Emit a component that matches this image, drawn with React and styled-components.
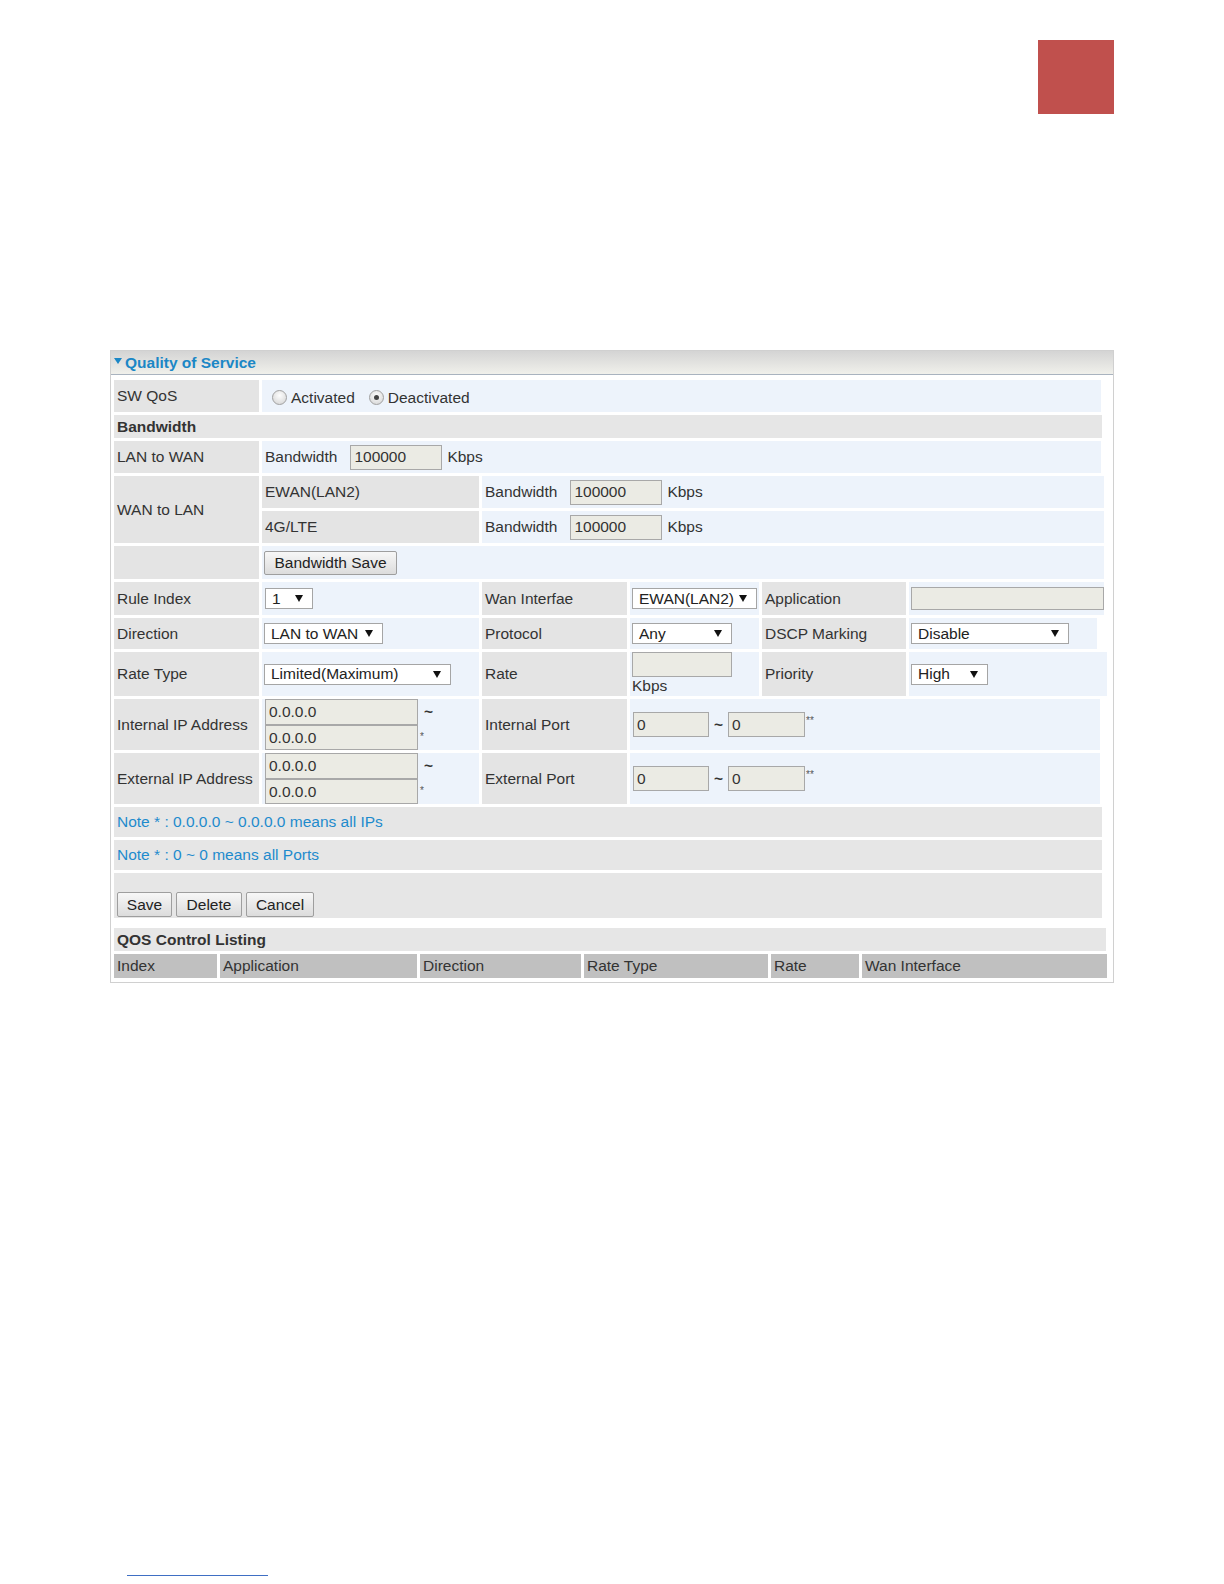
import React from "react";
import styled, { createGlobalStyle } from "styled-components";

const GlobalStyle = createGlobalStyle`
  body {
    margin: 0;
    background: #ffffff;
    font-family: "Liberation Sans", Arial, sans-serif;
  }
`;

const Page = styled.div`
  width: 1224px;
  min-height: 1584px;
  overflow: hidden;
`;

const TopBar = styled.div`
  display: flex;
  justify-content: flex-end;
  padding: 40px 110px 0 0;
`;

const Tab = styled.div`
  width: 76px;
  height: 74px;
  background: #c0504d;
`;

const Panel = styled.div`
  box-sizing: border-box;
  width: 1004px;
  margin: 236px 0 0 110px;
  border: 1px solid #d0d0d0;
  padding-bottom: 4px;
`;

const PanelHead = styled.div`
  height: 23px;
  display: flex;
  align-items: center;
  padding-left: 3px;
  background: linear-gradient(#d4d4d4, #f0f0eb);
  border-bottom: 1px solid #a9b3bf;
  color: #1b87c6;
  font-size: 15.5px;
  font-weight: bold;
`;

const Caret = styled.span`
  width: 0;
  height: 0;
  margin: 0 3px 4px 0;
  border-left: 4px solid transparent;
  border-right: 4px solid transparent;
  border-top: 6px solid #1b87c6;
`;

const PanelBody = styled.div`
  display: flex;
  flex-direction: column;
  gap: 3px;
  padding: 5px 0 0 3px;
`;

const Row = styled.div`
  display: flex;
  gap: 3px;
  width: ${(p) => (p.$w ? `${p.$w}px` : "auto")};
  height: ${(p) => p.$h}px;
  margin-top: ${(p) => p.$mt || 0}px;
`;

const SubRows = styled.div`
  flex: 1;
  display: flex;
  flex-direction: column;
  gap: 3px;
`;

const tones = {
  label: "#e4e4e4",
  value: "#edf3fb",
  head: "#c0c0c0",
  band: "#e6e6e6",
};

const Cell = styled.div`
  box-sizing: border-box;
  display: flex;
  flex-direction: ${(p) => (p.$col ? "column" : "row")};
  align-items: ${(p) => (p.$col ? "flex-start" : p.$align || "center")};
  justify-content: ${(p) => (p.$col ? p.$justify || "center" : "flex-start")};
  width: ${(p) => (p.$w ? `${p.$w}px` : "auto")};
  flex: ${(p) => (p.$w ? "none" : "1")};
  padding-left: ${(p) => (p.$pad !== undefined ? p.$pad : 3)}px;
  background: ${(p) => tones[p.$tone || "value"]};
  color: ${(p) => (p.$note ? "#1e8bcd" : "#333333")};
  font-size: 15.5px;
  font-weight: ${(p) => (p.$bold ? "bold" : "normal")};
  white-space: nowrap;
`;

const FieldText = styled.span`
  margin-right: 13px;
`;

const Unit = styled.span`
  margin-left: 5px;
`;

const Input = styled.input`
  box-sizing: border-box;
  width: ${(p) => p.$w}px;
  height: ${(p) => p.$h || 25}px;
  margin: 0;
  padding: 0 3px;
  border: 1px solid #a8a8a8;
  background: #ebebe4;
  color: #333333;
  font-family: "Liberation Sans", Arial, sans-serif;
  font-size: 15.5px;
  outline: none;
`;

const Select = styled.div`
  box-sizing: border-box;
  display: inline-flex;
  align-items: center;
  justify-content: space-between;
  width: ${(p) => p.$w}px;
  height: 21px;
  padding: 0 9px 0 6px;
  border: 1px solid #a5a5a5;
  background: #ffffff;
  color: #222222;
  font-size: 15.5px;
`;

const Arrow = styled.span`
  width: 0;
  height: 0;
  border-left: 4px solid transparent;
  border-right: 4px solid transparent;
  border-top: 7px solid #111111;
`;

const Button = styled.button`
  box-sizing: border-box;
  height: ${(p) => p.$h || 25}px;
  width: ${(p) => p.$w}px;
  padding: 0;
  border: 1px solid #9e9e9e;
  border-radius: 2px;
  background: linear-gradient(#f7f7f7, #dcdcdc);
  color: #222222;
  font-family: "Liberation Sans", Arial, sans-serif;
  font-size: 15.5px;
`;

const ButtonBar = styled.div`
  display: flex;
  gap: 4px;
  margin-bottom: 1px;
`;

const RadioGroup = styled.div`
  display: flex;
  align-items: center;
  gap: 14px;
  margin-top: 3px;
`;

const RadioLabel = styled.label`
  display: flex;
  align-items: center;
  gap: 4px;
`;

const Radio = styled.span`
  box-sizing: border-box;
  width: 15px;
  height: 15px;
  border-radius: 50%;
  border: 1px solid #a0a0a0;
  background: radial-gradient(circle at 50% 35%, #fdfdfd, #d2d2d2);
  display: flex;
  align-items: center;
  justify-content: center;
  &::after {
    content: "";
    width: 5px;
    height: 5px;
    border-radius: 50%;
    background: ${(p) => (p.$on ? "#444444" : "transparent")};
  }
`;

const Line = styled.div`
  display: flex;
  align-items: center;
`;

const Tilde = styled.span`
  margin: ${(p) => p.$m || "0 0 0 6px"};
  font-weight: bold;
  color: #333333;
`;

const Mark = styled.span`
  align-self: flex-start;
  margin: ${(p) => p.$m || "7px 0 0 2px"};
  font-size: 10px;
  line-height: 10px;
  color: #555555;
`;

const FootLine = styled.div`
  width: 141px;
  height: 1px;
  margin: 592px 0 0 127px;
  background: #3f6fc4;
`;

const Drop = ({ w, children }) => (
  <Select $w={w}>
    <span>{children}</span>
    <Arrow />
  </Select>
);

const BandwidthField = ({ w }) => (
  <>
    <FieldText>Bandwidth</FieldText>
    <Input $w={w} defaultValue="100000" readOnly />
    <Unit>Kbps</Unit>
  </>
);

const IpPair = () => (
  <Cell $w={217} $col>
    <Line>
      <Input $w={153} $h={26} defaultValue="0.0.0.0" readOnly />
      <Tilde>~</Tilde>
    </Line>
    <Line>
      <Input $w={153} $h={25} defaultValue="0.0.0.0" readOnly />
      <Mark>*</Mark>
    </Line>
  </Cell>
);

const PortPair = () => (
  <Cell>
    <Line>
      <Input $w={76} defaultValue="0" readOnly />
      <Tilde $m="0 5px">~</Tilde>
      <Input $w={77} defaultValue="0" readOnly />
      <Mark $m="4px 0 0 1px">**</Mark>
    </Line>
  </Cell>
);

const listing = [
  ["Index", 103],
  ["Application", 197],
  ["Direction", 161],
  ["Rate Type", 184],
  ["Rate", 88],
  ["Wan Interface", 0],
];

export default function App() {
  return (
    <>
      <GlobalStyle />
      <Page>
        <TopBar>
          <Tab />
        </TopBar>

        <Panel>
          <PanelHead>
            <Caret />
            Quality of Service
          </PanelHead>

          <PanelBody>
            <Row $w={987} $h={32}>
              <Cell $tone="label" $w={145}>SW QoS</Cell>
              <Cell $pad={10}>
                <RadioGroup>
                  <RadioLabel>
                    <Radio />
                    Activated
                  </RadioLabel>
                  <RadioLabel>
                    <Radio $on />
                    Deactivated
                  </RadioLabel>
                </RadioGroup>
              </Cell>
            </Row>

            <Row $w={988} $h={23}>
              <Cell $tone="band" $bold>Bandwidth</Cell>
            </Row>

            <Row $w={987} $h={32}>
              <Cell $tone="label" $w={145}>LAN to WAN</Cell>
              <Cell>
                <BandwidthField w={92} />
              </Cell>
            </Row>

            <Row $w={990} $h={67}>
              <Cell $tone="label" $w={145}>WAN to LAN</Cell>
              <SubRows>
                <Row $h={32}>
                  <Cell $tone="label" $w={217}>EWAN(LAN2)</Cell>
                  <Cell>
                    <BandwidthField w={92} />
                  </Cell>
                </Row>
                <Row $h={32}>
                  <Cell $tone="label" $w={217}>4G/LTE</Cell>
                  <Cell>
                    <BandwidthField w={92} />
                  </Cell>
                </Row>
              </SubRows>
            </Row>

            <Row $w={990} $h={33}>
              <Cell $tone="label" $w={145} />
              <Cell $pad={2}>
                <Button $w={133} $h={24}>Bandwidth Save</Button>
              </Cell>
            </Row>

            <Row $w={990} $h={33}>
              <Cell $tone="label" $w={145}>Rule Index</Cell>
              <Cell $w={217}>
                <Drop w={48}>1</Drop>
              </Cell>
              <Cell $tone="label" $w={145}>Wan Interfae</Cell>
              <Cell $w={129} $pad={2}>
                <Drop w={125}>EWAN(LAN2)</Drop>
              </Cell>
              <Cell $tone="label" $w={144}>Application</Cell>
              <Cell $pad={2}>
                <Input $w={193} $h={23} readOnly />
              </Cell>
            </Row>

            <Row $w={983} $h={31}>
              <Cell $tone="label" $w={145}>Direction</Cell>
              <Cell $w={217} $pad={2}>
                <Drop w={119}>LAN to WAN</Drop>
              </Cell>
              <Cell $tone="label" $w={145}>Protocol</Cell>
              <Cell $w={129} $pad={2}>
                <Drop w={100}>Any</Drop>
              </Cell>
              <Cell $tone="label" $w={144}>DSCP Marking</Cell>
              <Cell $pad={2}>
                <Drop w={158}>Disable</Drop>
              </Cell>
            </Row>

            <Row $w={993} $h={44}>
              <Cell $tone="label" $w={145}>Rate Type</Cell>
              <Cell $w={217} $pad={2}>
                <Drop w={187}>Limited(Maximum)</Drop>
              </Cell>
              <Cell $tone="label" $w={145}>Rate</Cell>
              <Cell $w={129} $pad={2} $col $justify="flex-start">
                <Input $w={100} readOnly />
                <span>Kbps</span>
              </Cell>
              <Cell $tone="label" $w={144}>Priority</Cell>
              <Cell $pad={2}>
                <Drop w={77}>High</Drop>
              </Cell>
            </Row>

            <Row $w={986} $h={51}>
              <Cell $tone="label" $w={145}>Internal IP Address</Cell>
              <IpPair />
              <Cell $tone="label" $w={145}>Internal Port</Cell>
              <PortPair />
            </Row>

            <Row $w={986} $h={51}>
              <Cell $tone="label" $w={145}>External IP Address</Cell>
              <IpPair />
              <Cell $tone="label" $w={145}>External Port</Cell>
              <PortPair />
            </Row>

            <Row $w={988} $h={30}>
              <Cell $tone="band" $note>Note * : 0.0.0.0 ~ 0.0.0.0 means all IPs</Cell>
            </Row>

            <Row $w={988} $h={30}>
              <Cell $tone="band" $note>Note * : 0 ~ 0 means all Ports</Cell>
            </Row>

            <Row $w={988} $h={45}>
              <Cell $tone="band" $align="flex-end">
                <ButtonBar>
                  <Button $w={55}>Save</Button>
                  <Button $w={66}>Delete</Button>
                  <Button $w={68}>Cancel</Button>
                </ButtonBar>
              </Cell>
            </Row>

            <Row $w={992} $h={23} $mt={7}>
              <Cell $tone="band" $bold>QOS Control Listing</Cell>
            </Row>

            <Row $w={993} $h={24}>
              {listing.map(([name, w]) => (
                <Cell key={name} $tone="head" $w={w || undefined}>
                  {name}
                </Cell>
              ))}
            </Row>
          </PanelBody>
        </Panel>

        <FootLine />
      </Page>
    </>
  );
}
